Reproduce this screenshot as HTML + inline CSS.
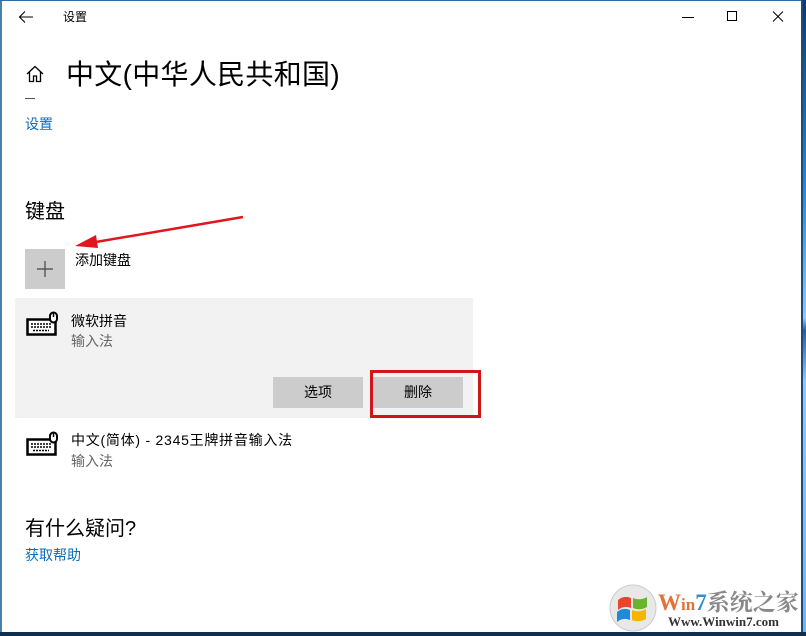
<!DOCTYPE html>
<html><head><meta charset="utf-8"><style>
*{margin:0;padding:0;box-sizing:border-box}
html,body{width:806px;height:636px;overflow:hidden;background:#fff;font-family:"Liberation Sans","Noto Sans CJK SC",sans-serif;color:#000}
.a{position:absolute;white-space:nowrap}
</style></head><body>
<div class="a" style="left:0;top:0;width:2px;height:636px;background:#4a7fa8"></div>
<div class="a" style="left:0;top:0;width:806px;height:1px;background:#2d6da3"></div>
<div class="a" style="left:801px;top:0;width:2px;height:636px;background:#1c4d7a"></div>
<div class="a" style="left:803px;top:0;width:3px;height:636px;background:linear-gradient(#0d3b66,#1b8ce8 30%,#8ecbf0 50%,#2a5f90 52%,#8ecbf0 60%,#6fb6ea)"></div>
<div class="a" style="left:0;top:632px;width:806px;height:4px;background:#0c2f52"></div>

<svg class="a" style="left:18px;top:10px" width="16" height="14" viewBox="0 0 16 14"><path d="M15 7H2M7 1.5L1.5 7L7 12.5" stroke="#000" stroke-width="1.1" fill="none"/></svg>
<div class="a" style="left:63px;top:8px;font-size:12px">设置</div>
<svg class="a" style="left:681px;top:10px" width="110" height="14"><path d="M1 7.5H13" stroke="#000"/><rect x="46.5" y="1.5" width="9" height="9" stroke="#000" fill="none"/><path d="M92 1.5L102 11.5M102 1.5L92 11.5" stroke="#000"/></svg>

<svg class="a" style="left:25px;top:64px" width="20" height="20" viewBox="0 0 20 20"><path d="M2 10L10 2.5L18 10M4.5 8V17.5H8.5V12H11.5V17.5H15.5V8" stroke="#000" stroke-width="1.3" fill="none"/></svg>
<div class="a" style="left:66px;top:53px;font-size:28px;letter-spacing:0.3px">中文(中华人民共和国)</div>
<div class="a" style="left:25px;top:97px;width:30px;height:6px;overflow:hidden"><div style="background:#555;width:10px;height:1px;margin-top:1px"></div></div>
<div class="a" style="left:25px;top:114px;font-size:14px;color:#0a6cbd">设置</div>

<div class="a" style="left:25px;top:195px;font-size:20px">键盘</div>
<div class="a" style="left:25px;top:249px;width:40px;height:40px;background:#cccccc"></div>
<svg class="a" style="left:36px;top:260px" width="18" height="18"><path d="M9 1V17M1 9H17" stroke="#444" stroke-width="1.2"/></svg>
<div class="a" style="left:75px;top:250px;font-size:14px">添加键盘</div>

<div class="a" style="left:15px;top:298px;width:458px;height:120px;background:#f2f2f2"></div>
<svg class="a" style="left:26px;top:311px" width="34" height="28" viewBox="0 0 34 28"><rect x="1.5" y="8.5" width="28" height="15" fill="#fff" stroke="#000" stroke-width="2.5"/><path d="M5 13h20M5 16h20M7 19.5h16" stroke="#000" stroke-width="1.5" stroke-dasharray="2 1"/><rect x="24" y="1.5" width="7" height="10" rx="3.5" fill="#fff" stroke="#000" stroke-width="2"/><path d="M27.5 2v4" stroke="#000" stroke-width="1.5"/></svg>
<div class="a" style="left:71px;top:311px;font-size:14px">微软拼音</div>
<div class="a" style="left:71px;top:331px;font-size:14px;color:#666">输入法</div>
<div class="a" style="left:273px;top:377px;width:90px;height:31px;background:#cccccc;font-size:14px;text-align:center;line-height:31px">选项</div>
<div class="a" style="left:373px;top:377px;width:90px;height:31px;background:#cccccc;font-size:14px;text-align:center;line-height:31px">删除</div>
<div class="a" style="left:370px;top:370px;width:111px;height:48px;border:3px solid #d0161c"></div>

<svg class="a" style="left:26px;top:431px" width="34" height="28" viewBox="0 0 34 28"><rect x="1.5" y="8.5" width="28" height="15" fill="#fff" stroke="#000" stroke-width="2.5"/><path d="M5 13h20M5 16h20M7 19.5h16" stroke="#000" stroke-width="1.5" stroke-dasharray="2 1"/><rect x="24" y="1.5" width="7" height="10" rx="3.5" fill="#fff" stroke="#000" stroke-width="2"/><path d="M27.5 2v4" stroke="#000" stroke-width="1.5"/></svg>
<div class="a" style="left:71px;top:430px;font-size:14px;letter-spacing:0.75px">中文(简体) - 2345王牌拼音输入法</div>
<div class="a" style="left:71px;top:451px;font-size:14px;color:#666">输入法</div>

<div class="a" style="left:25px;top:512px;font-size:20px">有什么疑问?</div>
<div class="a" style="left:25px;top:545px;font-size:14px;color:#0a6cbd">获取帮助</div>

<svg class="a" style="left:0;top:0" width="806" height="636"><path d="M243 217L90 243" stroke="#e0161c" stroke-width="2.5"/><path d="M75 246L96 235L98 248Z" fill="#e0161c"/></svg>

<svg class="a" style="left:608px;top:583px" width="50" height="50"><circle cx="25" cy="25" r="23" fill="#e8e8e8" stroke="#ccc"/><path d="M10 17q6-5 13-2v10q-7-3-13 2z" fill="#e8452c"/><path d="M25 15q7 3 14-1v10q-7 4-14 1z" fill="#6ab42d"/><path d="M9 29q6-5 13-2v10q-7-3-13 2z" fill="#1f8ad6"/><path d="M24 27q7 3 14-1v10q-7 4-14 1z" fill="#f7b500"/></svg>
<div class="a" style="left:658px;top:584px;font-size:23px;font-weight:bold;font-family:'Liberation Serif','Noto Serif CJK SC',serif;color:#e0743a">W<span style="font-size:17px">in</span><span style="color:#2f8fd6">7</span><span style="color:#888">系统之家</span></div>
<div class="a" style="left:668px;top:614px;font-size:13px;font-weight:bold;font-family:'Liberation Serif',serif;color:#333">Www.Winwin7.com</div>
</body></html>
